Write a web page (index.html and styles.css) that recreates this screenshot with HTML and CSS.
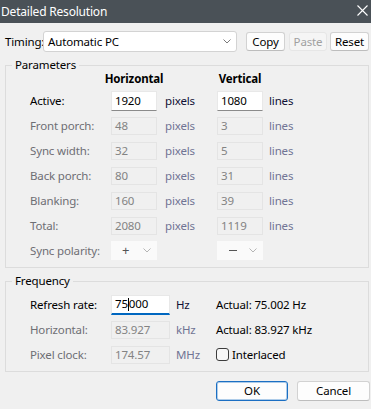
FILE: index.html
```html
<!DOCTYPE html>
<html lang="en">
<head>
<meta charset="utf-8">
<title>Detailed Resolution</title>
<link rel="stylesheet" href="styles.css">
</head>
<body>
<div class="dialog">
  <div class="titlebar">
    <span class="title">Detailed Resolution</span>
    <svg class="close" width="11" height="11" viewBox="0 0 11 11"><path d="M0.5 0.5 L10.5 10.5 M10.5 0.5 L0.5 10.5" stroke="#ffffff" stroke-width="1.1" fill="none"/></svg>
  </div>

  <div class="timing">
    <span class="timing-label">Timing:</span>
    <div class="combo">
      <span>Automatic PC</span>
      <svg class="chev" width="8" height="5" viewBox="0 0 8 5"><polyline points="0.5,0.5 4,4 7.5,0.5" fill="none" stroke="#7a7a7a" stroke-width="1"/></svg>
    </div>
    <button class="btn copy">Copy</button>
    <button class="btn paste" disabled>Paste</button>
    <button class="btn reset">Reset</button>
  </div>

  <fieldset class="group params">
    <legend>Parameters</legend>
    <div class="pgrid">
      <span></span><span class="hdr">Horizontal</span><span></span><span class="hdr">Vertical</span><span></span>

      <span class="lbl">Active:</span><span class="field on">1920</span><span class="unit u-h">pixels</span><span class="field on">1080</span><span class="unit u-v">lines</span>

      <span class="lbl off">Front porch:</span><span class="field">48</span><span class="unit u-h off">pixels</span><span class="field">3</span><span class="unit u-v off">lines</span>

      <span class="lbl off">Sync width:</span><span class="field">32</span><span class="unit u-h off">pixels</span><span class="field">5</span><span class="unit u-v off">lines</span>

      <span class="lbl off">Back porch:</span><span class="field">80</span><span class="unit u-h off">pixels</span><span class="field">31</span><span class="unit u-v off">lines</span>

      <span class="lbl off">Blanking:</span><span class="field">160</span><span class="unit u-h off">pixels</span><span class="field">39</span><span class="unit u-v off">lines</span>

      <span class="lbl off">Total:</span><span class="field">2080</span><span class="unit u-h off">pixels</span><span class="field">1119</span><span class="unit u-v off">lines</span>

      <span class="lbl off">Sync polarity:</span>
      <span class="pol"><span class="sign">+</span><svg class="chev" width="8" height="5" viewBox="0 0 8 5"><polyline points="0.5,0.5 4,4 7.5,0.5" fill="none" stroke="#b5b5b5" stroke-width="1"/></svg></span>
      <span></span>
      <span class="pol"><span class="sign dash"></span><svg class="chev" width="8" height="5" viewBox="0 0 8 5"><polyline points="0.5,0.5 4,4 7.5,0.5" fill="none" stroke="#b5b5b5" stroke-width="1"/></svg></span>
      <span></span>
    </div>
  </fieldset>

  <fieldset class="group freq">
    <legend>Frequency</legend>
    <div class="fgrid">
      <span class="lbl">Refresh rate:</span><span class="field on focus">75<span class="caret"></span>000</span><span class="unit u-f">Hz</span><span class="actual">Actual: 75.002 Hz</span>

      <span class="lbl off">Horizontal:</span><span class="field">83.927</span><span class="unit u-f off">kHz</span><span class="actual">Actual: 83.927 kHz</span>

      <span class="lbl off">Pixel clock:</span><span class="field">174.57</span><span class="unit u-f off">MHz</span><span class="actual check"><span class="box"></span>Interlaced</span>
    </div>
  </fieldset>

  <div class="actions">
    <button class="btn big ok">OK</button>
    <button class="btn big cancel">Cancel</button>
  </div>
</div>
</body>
</html>
```

FILE: styles.css
```css
* { box-sizing: border-box; }

html, body {
  margin: 0;
  padding: 0;
  background: #f0f0f0;
}

body {
  font-family: "Noto Sans", "Open Sans", sans-serif;
  font-size: 11.5px;
  letter-spacing: -0.15px;
  color: #000;
  width: 371px;
  height: 409px;
  overflow: hidden;
}

.dialog {
  display: flex;
  flex-direction: column;
}

.titlebar {
  height: 23px;
  background: #4a5157;
  color: #ffffff;
  display: flex;
  align-items: center;
  justify-content: space-between;
  padding: 0 3px 0 1px;
}

.title {
  font-size: 12px;
  letter-spacing: -0.2px;
  line-height: 16px;
}

.close {
  display: block;
  margin-top: -3px;
}

.timing {
  display: flex;
  align-items: center;
  margin-top: 8px;
  padding-left: 5px;
  height: 21px;
}

.timing-label {
  width: 38px;
  flex-shrink: 0;
  white-space: nowrap;
}

.combo {
  width: 194px;
  flex-shrink: 0;
  height: 21px;
  background: #ffffff;
  border: 1px solid #d3d3d3;
  border-radius: 3px;
  display: flex;
  align-items: center;
  justify-content: space-between;
  padding: 0 5px 0 4px;
}

.btn {
  font-family: inherit;
  font-size: 11.5px;
  letter-spacing: -0.15px;
  height: 19px;
  padding: 0;
  background: #fdfdfd;
  border: 1px solid #d2d2d2;
  border-bottom-color: #bdbdbd;
  border-radius: 3px;
  color: #000;
  line-height: 16px;
  flex-shrink: 0;
}

.copy { width: 39px; margin-left: 9px; }
.paste {
  width: 38px;
  margin-left: 4px;
  background: #f5f5f5;
  border-color: #e6e6e6;
  color: #a0a0a0;
}
.reset { width: 39px; margin-left: 3px; }

.group {
  margin: 0 2px 0 5px;
  padding: 0;
  border: 1px solid #dcdcdc;
  min-width: 0;
}

.group legend {
  margin-left: 6px;
  padding: 0 3px;
  line-height: 14px;
}

.params { margin-top: 6px; }
.freq { margin-top: 6px; }

.pgrid {
  display: grid;
  grid-template-columns: 81px 46px 60px 46px 1fr;
  grid-template-rows: 16px repeat(7, 25px);
  padding: 0 0 4px 24px;
  align-items: center;
}

.fgrid {
  display: grid;
  grid-template-columns: 81px 59px 46px 1fr;
  grid-template-rows: repeat(3, 25px);
  padding: 4px 0 4px 24px;
  align-items: center;
}

.hdr {
  display: flex;
  justify-content: center;
  white-space: nowrap;
  font-weight: bold;
  align-self: start;
  line-height: 14px;
}

.lbl { color: #000; white-space: nowrap; }
.off { color: #6e6e74; }

.unit { white-space: nowrap; color: #101035; }
.unit.off { color: #707494; }
.u-h { padding-left: 8px; }
.u-v { padding-left: 6px; }
.u-f { padding-left: 6px; }

.field {
  height: 18px;
  border: 1px solid #e4e4e4;
  background: #f0f0f0;
  color: #838383;
  padding-left: 3px;
  line-height: 16px;
  display: flex;
  align-items: center;
  white-space: nowrap;
}

.field.on {
  height: 20px;
  background: #ffffff;
  color: #000;
  border-color: #e8e8e8;
  border-bottom-color: #8a8a8a;
}

.field.focus {
  border-bottom: 2px solid #0067c0;
}

.caret {
  display: inline-block;
  width: 1px;
  height: 13px;
  background: #000;
}

.pol {
  height: 19px;
  background: #fafafa;
  display: flex;
  align-items: center;
  justify-content: space-between;
  padding: 0 6px 0 11px;
}

.sign {
  color: #555;
  font-size: 13px;
  line-height: 13px;
}

.sign.dash {
  width: 8px;
  height: 1px;
  background: #555;
  margin-left: 1px;
}

.actual {
  white-space: nowrap;
  color: #000;
}

.check {
  display: flex;
  align-items: center;
}

.box {
  width: 13px;
  height: 13px;
  border: 1px solid #3c3c3c;
  border-radius: 3px;
  background: #f7f7f7;
  margin-right: 3px;
}

.actions {
  display: flex;
  justify-content: flex-end;
  margin-top: 9px;
  padding-right: 1px;
}

.big {
  height: 20px;
}

.ok {
  width: 72px;
  border: 1px solid #1b6fc3;
  box-shadow: inset 0 0 0 1px rgba(27, 111, 195, 0.35);
}

.cancel {
  width: 73px;
  margin-left: 9px;
}
```
